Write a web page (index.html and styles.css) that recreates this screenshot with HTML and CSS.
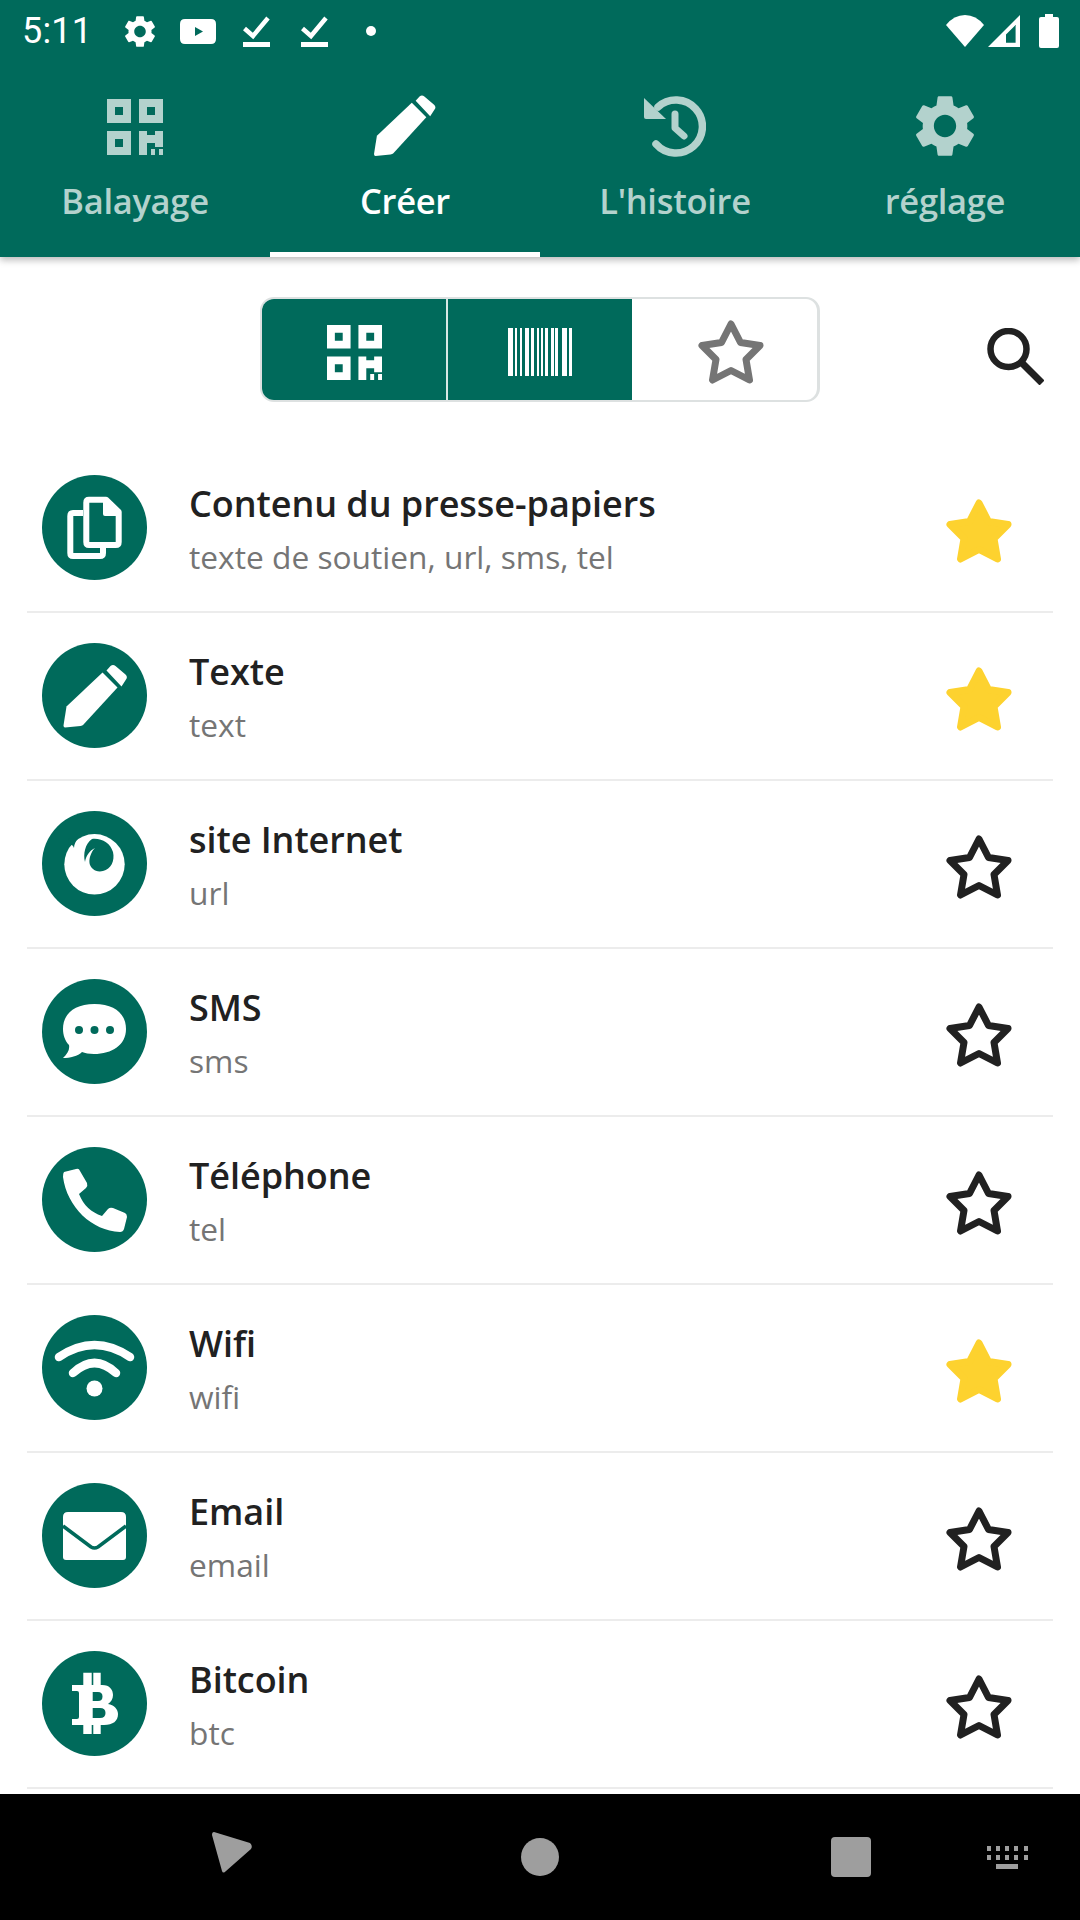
FILE: index.html
```html
<!DOCTYPE html>
<html lang="fr">
<head>
<meta charset="utf-8">
<title>QR</title>
<link rel="stylesheet" href="styles.css">
</head>
<body>
<svg class="sprite" xmlns="http://www.w3.org/2000/svg">
  <defs>
    <symbol id="gear" viewBox="2 2 20 20"><path fill-rule="evenodd" d="M19.14 12.94c.04-.3.06-.61.06-.94 0-.32-.02-.64-.07-.94l2.03-1.58a.49.49 0 0 0 .12-.61l-1.92-3.32a.488.488 0 0 0-.59-.22l-2.39.96c-.5-.38-1.03-.7-1.62-.94l-.36-2.54a.484.484 0 0 0-.48-.41h-3.84c-.24 0-.43.17-.47.41l-.36 2.54c-.59.24-1.13.57-1.62.94l-2.39-.96c-.22-.08-.47 0-.59.22L2.74 8.87c-.12.21-.08.47.12.61l2.03 1.58c-.05.3-.09.63-.09.94s.02.64.07.94l-2.03 1.58a.49.49 0 0 0-.12.61l1.92 3.32c.12.22.37.29.59.22l2.39-.96c.5.38 1.03.7 1.62.94l.36 2.54c.05.24.24.41.48.41h3.84c.24 0 .44-.17.47-.41l.36-2.54c.59-.24 1.13-.56 1.62-.94l2.39.96c.22.08.47 0 .59-.22l1.92-3.32c.12-.22.07-.47-.12-.61l-2.01-1.58zM12 15.6c-1.98 0-3.6-1.62-3.6-3.6s1.62-3.6 3.6-3.6 3.6 1.62 3.6 3.6-1.62 3.6-3.6 3.6z"/></symbol>
    <symbol id="qr" viewBox="0 0 56 56"><path fill-rule="evenodd" d="M0 0h24v24H0zM8 8v8h8V8zM32 0h24v24H32zM40 8v8h8V8zM0 32h24v24H0zM8 40v8h8v-8zM32 32h8v4h8v-4h8v16h-8v-4h-8v12h-8zM44 50h4v6h-4zM52 50h4v6h-4z"/></symbol>
    <symbol id="pencil" viewBox="0 0 64 64"><path d="M1.500 63 Q0 63 0 61 L3 42 L39 8 L54 23 L20 60 Q19 61 17 61.500 Z"/><path d="M43 6 L47 1.500 Q49.500 -.5 52 1.500 L62 10 Q64.500 12.500 62.500 15 L58 22 Z"/></symbol>
    <symbol id="history" viewBox="0 0 62 62"><path d="M0 3 L22 24 L2 24 Q0 24 0 22 Z"/><path fill="none" stroke="currentColor" stroke-width="7.500" stroke-linecap="round" d="M14 12 A26.500 26.500 0 1 1 12 49"/><path fill="none" stroke="currentColor" stroke-width="7" stroke-linecap="round" stroke-linejoin="round" d="M31 19 L31 33 L40 41"/></symbol>
    <symbol id="star" viewBox="0 0 66 64"><path d="M33 4 L42.500 22.500 L62 25.500 L48 39.500 L51.500 60 L33 50.500 L14.500 60 L18 39.500 L4 25.500 L23.500 22.500 Z" stroke-width="7" stroke-linejoin="round"/></symbol>
    <symbol id="copy" viewBox="0 0 105 105"><path fill="none" stroke="#fff" stroke-width="6" stroke-linejoin="round" d="M41 38 H31 Q28.300 38 28.300 41 V78 Q28.300 81 31 81 H58 Q61 81 61 78 V72"/><path fill="none" stroke="#fff" stroke-width="6" stroke-linejoin="round" d="M47 24.700 H64 L76.700 37 V67 Q76.700 70 73.700 70 H47 Q44.300 70 44.300 67 V27.500 Q44.300 24.700 47 24.700 Z"/><path fill="#fff" d="M61 24 H65 L78 37 V41 H63 Q61 41 61 39 Z"/></symbol>
    <symbol id="pencilw" viewBox="0 0 105 105"><g transform="translate(21.500 21.500)" fill="#fff"><path d="M1.500 63 Q0 63 0 61 L3 42 L39 8 L54 23 L20 60 Q19 61 17 61.500 Z"/><path d="M43 6 L47 1.500 Q49.500 -.5 52 1.500 L62 10 Q64.500 12.500 62.500 15 L58 22 Z"/></g></symbol>
    <symbol id="site" viewBox="0 0 105 105"><circle cx="52.500" cy="53.300" r="30.200" fill="#fff"/><path fill="#006a5b" d="M50 28 C60 27 68 32 71 41 C73 50 69 58 61 60 C54 62 48 57 47.500 52 C47 47 49 41 53 37 C47 40 44 45 43 51 C41 43 43 33 50 28 Z"/><path fill="#006a5b" d="M27 27 L36 27.500 C34 30 32 33 32 37 C31 34 29 33 26 33 Z"/></symbol>
    <symbol id="sms" viewBox="0 0 105 105"><path fill="#fff" fill-rule="evenodd" d="M52.500 25 C73 25 84 35 84 50 C84 66 70 75 52 75 C47 75 43 74 40 73 C36 77 28 79 21 79 C25 75 28 71 27 66 C23 62 21 56 21 50 C21 35 32 25 52.500 25 Z"/><circle cx="37" cy="51" r="4" fill="#006a5b"/><circle cx="52.500" cy="51" r="4" fill="#006a5b"/><circle cx="68" cy="51" r="4" fill="#006a5b"/></symbol>
    <symbol id="phone" viewBox="0 0 105 105"><path fill="#fff" d="M22 25 L34 22 Q37 21 38 24 L45 36 Q46 39 44 41 L37 47 C42 59 49 65 60 69 L66 62 Q68 60 71 61 L83 66 Q85 67 85 70 L82 82 Q81 85 78 85 C50 84 25 60 21 30 Q21 26 22 25 Z"/></symbol>
    <symbol id="wifi" viewBox="0 0 105 105"><path fill="none" stroke="#fff" stroke-width="8.500" stroke-linecap="round" d="M17 42 Q52.500 18 88 42"/><path fill="none" stroke="#fff" stroke-width="8.500" stroke-linecap="round" d="M31 58 Q52.500 38 74 58"/><circle cx="52.500" cy="73.500" r="8" fill="#fff"/></symbol>
    <symbol id="mail" viewBox="0 0 105 105"><path fill="#fff" d="M26 29 H79 Q84 29 84 34 V74 Q84 77 81 77 H24 Q21 77 21 74 V34 Q21 29 26 29 Z"/><path fill="none" stroke="#006a5b" stroke-width="3.500" d="M21 43 L49 64 Q52.500 66 56 64 L84 43"/></symbol>
    <symbol id="btc" viewBox="0 0 105 105"><path fill="#fff" fill-rule="evenodd" d="M30 34 H60 C68 34 71 39 71 44 C71 48 69 51 66 53 C72 54 76 58 76 63 C76 70 71 74 62 74 H30 V68 H35 Q37 68 37 66 V42 Q37 40 35 40 H30 Z M50.700 41 V50 H56 Q60.500 50 60.500 45.500 Q60.500 41 56 41 Z M50.700 57 V67 H58 Q63.500 67 63.500 62 Q63.500 57 58 57 Z"/><path fill="#fff" d="M41.300 21.700h8.400V36h-8.400zM51.300 21.700h7.400V36h-7.400zM41.300 72h8.400v11h-8.400zM51.300 72h7.400v11h-7.400z"/></symbol>
  </defs>
</svg>

<div class="screen">
  <header class="appbar">
    <div class="status">
      <span class="time">5:11</span>
      <svg class="st-gear"><use href="#gear"/></svg>
      <svg class="st-yt" viewBox="0 0 36 25"><path fill-rule="evenodd" d="M5 0h26q5 0 5 5v15q0 5-5 5H5q-5 0-5-5V5q0-5 5-5zM15 8v9l8-4.500z"/></svg>
      <svg class="st-check" viewBox="0 0 27 31"><path d="M0 26h27v5H0z"/><path fill="none" stroke="#fff" stroke-width="4.500" d="M1.500 12.500 L10 20 L25 2"/></svg>
      <svg class="st-check" viewBox="0 0 27 31"><path d="M0 26h27v5H0z"/><path fill="none" stroke="#fff" stroke-width="4.500" d="M1.500 12.500 L10 20 L25 2"/></svg>
      <span class="st-dot"></span>
      <span class="st-spacer"></span>
      <svg class="st-wifi" viewBox="0 0 38 32"><path d="M19 32 L0 10 Q8 0 19 0 Q30 0 38 10 Z"/></svg>
      <svg class="st-signal" viewBox="0 0 32 32"><path fill-rule="evenodd" d="M32 0V32H0zM27.600 10V27.700H18V19.600z"/></svg>
      <svg class="st-batt" viewBox="0 0 20 34"><path d="M6 0h8v3h4q2 0 2 2v27q0 2-2 2H2q-2 0-2-2V5q0-2 2-2h4z"/></svg>
    </div>
    <nav class="tabs">
      <div class="tab"><svg class="tab-ico qr-ico"><use href="#qr"/></svg><span class="tab-label">Balayage</span></div>
      <div class="tab active"><svg class="tab-ico"><use href="#pencil"/></svg><span class="tab-label">Créer</span></div>
      <div class="tab"><svg class="tab-ico"><use href="#history"/></svg><span class="tab-label">L'histoire</span></div>
      <div class="tab"><svg class="tab-ico"><use href="#gear"/></svg><span class="tab-label">réglage</span></div>
    </nav>
  </header>

  <section class="toolbar">
    <div class="segments">
      <div class="seg on first"><svg class="seg-qr"><use href="#qr"/></svg></div>
      <div class="seg on"><svg class="seg-bar" viewBox="0 0 64 48"><path d="M0 0h5v48H0zM7 0h2v48H7zM12 0h2v48h-2zM17 0h4v48h-4zM23 0h3v48h-3zM29 0h2v48h-2zM33 0h2v48h-2zM37 0h3v48h-3zM43 0h3v48h-3zM47 0h3v48h-3zM54 0h5v48h-5zM61 0h3v48h-3z"/></svg></div>
      <div class="seg"><svg class="seg-star"><use href="#star"/></svg></div>
    </div>
    <svg class="search" viewBox="0 0 57 57"><circle cx="21.500" cy="21" r="18" fill="none" stroke="#212121" stroke-width="6.500"/><path d="M34 34 L55 55" fill="none" stroke="#212121" stroke-width="7"/></svg>
  </section>

  <ul class="list">
    <li class="row"><svg class="badge"><circle cx="52.500" cy="52.500" r="52.500"/><use href="#copy"/></svg><div class="txt"><div class="ttl">Contenu du presse-papiers</div><div class="sub">texte de soutien, url, sms, tel</div></div><svg class="fav on"><use href="#star"/></svg></li>
    <li class="row"><svg class="badge"><circle cx="52.500" cy="52.500" r="52.500"/><use href="#pencilw"/></svg><div class="txt"><div class="ttl">Texte</div><div class="sub">text</div></div><svg class="fav on"><use href="#star"/></svg></li>
    <li class="row"><svg class="badge"><circle cx="52.500" cy="52.500" r="52.500"/><use href="#site"/></svg><div class="txt"><div class="ttl">site Internet</div><div class="sub">url</div></div><svg class="fav"><use href="#star"/></svg></li>
    <li class="row"><svg class="badge"><circle cx="52.500" cy="52.500" r="52.500"/><use href="#sms"/></svg><div class="txt"><div class="ttl">SMS</div><div class="sub">sms</div></div><svg class="fav"><use href="#star"/></svg></li>
    <li class="row"><svg class="badge"><circle cx="52.500" cy="52.500" r="52.500"/><use href="#phone"/></svg><div class="txt"><div class="ttl">Téléphone</div><div class="sub">tel</div></div><svg class="fav"><use href="#star"/></svg></li>
    <li class="row"><svg class="badge"><circle cx="52.500" cy="52.500" r="52.500"/><use href="#wifi"/></svg><div class="txt"><div class="ttl">Wifi</div><div class="sub">wifi</div></div><svg class="fav on"><use href="#star"/></svg></li>
    <li class="row"><svg class="badge"><circle cx="52.500" cy="52.500" r="52.500"/><use href="#mail"/></svg><div class="txt"><div class="ttl">Email</div><div class="sub">email</div></div><svg class="fav"><use href="#star"/></svg></li>
    <li class="row"><svg class="badge"><circle cx="52.500" cy="52.500" r="52.500"/><use href="#btc"/></svg><div class="txt"><div class="ttl">Bitcoin</div><div class="sub">btc</div></div><svg class="fav"><use href="#star"/></svg></li>
  </ul>

  <footer class="navbar">
    <svg class="nav-back" viewBox="0 0 41 42"><path d="M2 0 L38 11 Q41 14 39 17 L14 39 Q11 42 10 39 L0 3 Q0 0 2 0 Z"/></svg>
    <span class="nav-home"></span>
    <span class="nav-recent"></span>
    <svg class="nav-kbd" viewBox="0 0 41 23"><path d="M0 0h4v5H0zM9 0h4v5H9zM18 0h4v5h-4zM27 0h4v5h-4zM37 0h4v5h-4zM0 9h4v5H0zM9 9h4v5H9zM18 9h4v5h-4zM27 9h4v5h-4zM37 9h4v5h-4zM9 18h22v5H9z"/></svg>
  </footer>
</div>
</body>
</html>
```

FILE: styles.css
```css
* { box-sizing: border-box; }
html, body { margin: 0; padding: 0; }
body { width: 1080px; height: 1920px; overflow: hidden; background: #fff; font-family: "Open Sans", "Noto Sans", sans-serif; }
.sprite { width: 0; height: 0; position: absolute; }
.screen { width: 1080px; height: 1920px; display: flex; flex-direction: column; }

.appbar { height: 257px; background: #006a5b; box-shadow: 0 3px 7px rgba(0,0,0,.28); position: relative; z-index: 1; display: flex; flex-direction: column; flex: none; }
.status { height: 62px; flex: none; display: flex; align-items: center; padding: 0 21px 0 22px; color: #fff; fill: #fff; }
.time { font-family: Roboto, sans-serif; font-size: 36px; width: 102px; letter-spacing: .2px; }
.st-gear { width: 32px; height: 33px; margin-right: 24px; }
.st-yt { width: 36px; height: 25px; margin-right: 27px; }
.st-check { width: 27px; height: 31px; margin-right: 31px; }
.st-dot { width: 10px; height: 10px; border-radius: 50%; background: #fff; margin-left: 7px; }
.st-spacer { flex: 1; }
.st-wifi { width: 38px; height: 32px; margin-right: 4px; }
.st-signal { width: 32px; height: 32px; margin-right: 19px; }
.st-batt { width: 20px; height: 34px; }

.tabs { flex: 1; display: grid; grid-template-columns: repeat(4, 270px); }
.tab { position: relative; display: flex; flex-direction: column; align-items: center; color: #b3d2cd; fill: #b3d2cd; padding-top: 33px; }
.tab.active { color: #fff; fill: #fff; }
.tab.active::after { content: ""; position: absolute; left: 0; right: 0; bottom: 0; height: 5px; background: #fff; }
.tab-ico { width: 62px; height: 62px; display: block; }
.qr-ico { width: 56px; height: 56px; margin: 4px 0 2px; }
.tab-label { font-size: 34.5px; font-weight: 600; line-height: 40px; margin-top: 24px; letter-spacing: -.3px; }

.toolbar { height: 188px; flex: none; position: relative; display: flex; justify-content: center; padding-top: 40px; }
.segments { width: 560px; height: 105px; border: 2px solid #dde1e1; border-right-width: 3px; border-radius: 14px; display: flex; overflow: hidden; }
.seg { flex: 0 0 186px; display: flex; align-items: center; justify-content: center; padding-top: 5px; }
.seg.first { flex-basis: 184px; }
.seg.on { background: #006a5b; fill: #fff; }
.seg.on + .seg.on { border-left: 2px solid #d7e8e5; }
.seg-qr { width: 55px; height: 55px; }
.seg-bar { width: 64px; height: 48px; }
.seg-star { width: 66px; height: 64px; fill: none; stroke: #757575; margin-left: 12px; }
.search { position: absolute; right: 36px; top: 71px; width: 57px; height: 57px; }

.list { list-style: none; margin: 0; padding: 0 27px; flex: 1; min-height: 0; overflow: hidden; }
.row { height: 168px; border-bottom: 2px solid #ececec; display: flex; align-items: center; padding: 0 0 1px 15px; }
.badge { width: 105px; height: 105px; flex: none; fill: #006a5b; }
.txt { margin-left: 42px; flex: 1; padding-top: 4px; }
.ttl { font-size: 36px; font-weight: 600; color: #212121; line-height: 44px; letter-spacing: -.05px; }
.sub { font-size: 31.7px; color: #757575; line-height: 40px; margin-top: 11px; }
.fav { width: 66px; height: 64px; flex: none; margin: 7px 41px 0 0; fill: none; stroke: #212121; }
.fav.on { fill: #fdd22f; stroke: #fdd22f; }

.navbar { height: 126px; flex: none; background: #000; position: relative; display: block; }
.navbar > * { position: absolute; fill: #9e9e9e; }
.nav-back { left: 212px; top: 38px; width: 41px; height: 42px; }
.nav-home { left: 521px; top: 44px; width: 38px; height: 38px; border-radius: 50%; background: #9e9e9e; }
.nav-recent { left: 831px; top: 43px; width: 40px; height: 40px; border-radius: 4px; background: #9e9e9e; }
.nav-kbd { left: 987px; top: 52px; width: 41px; height: 23px; }
```
